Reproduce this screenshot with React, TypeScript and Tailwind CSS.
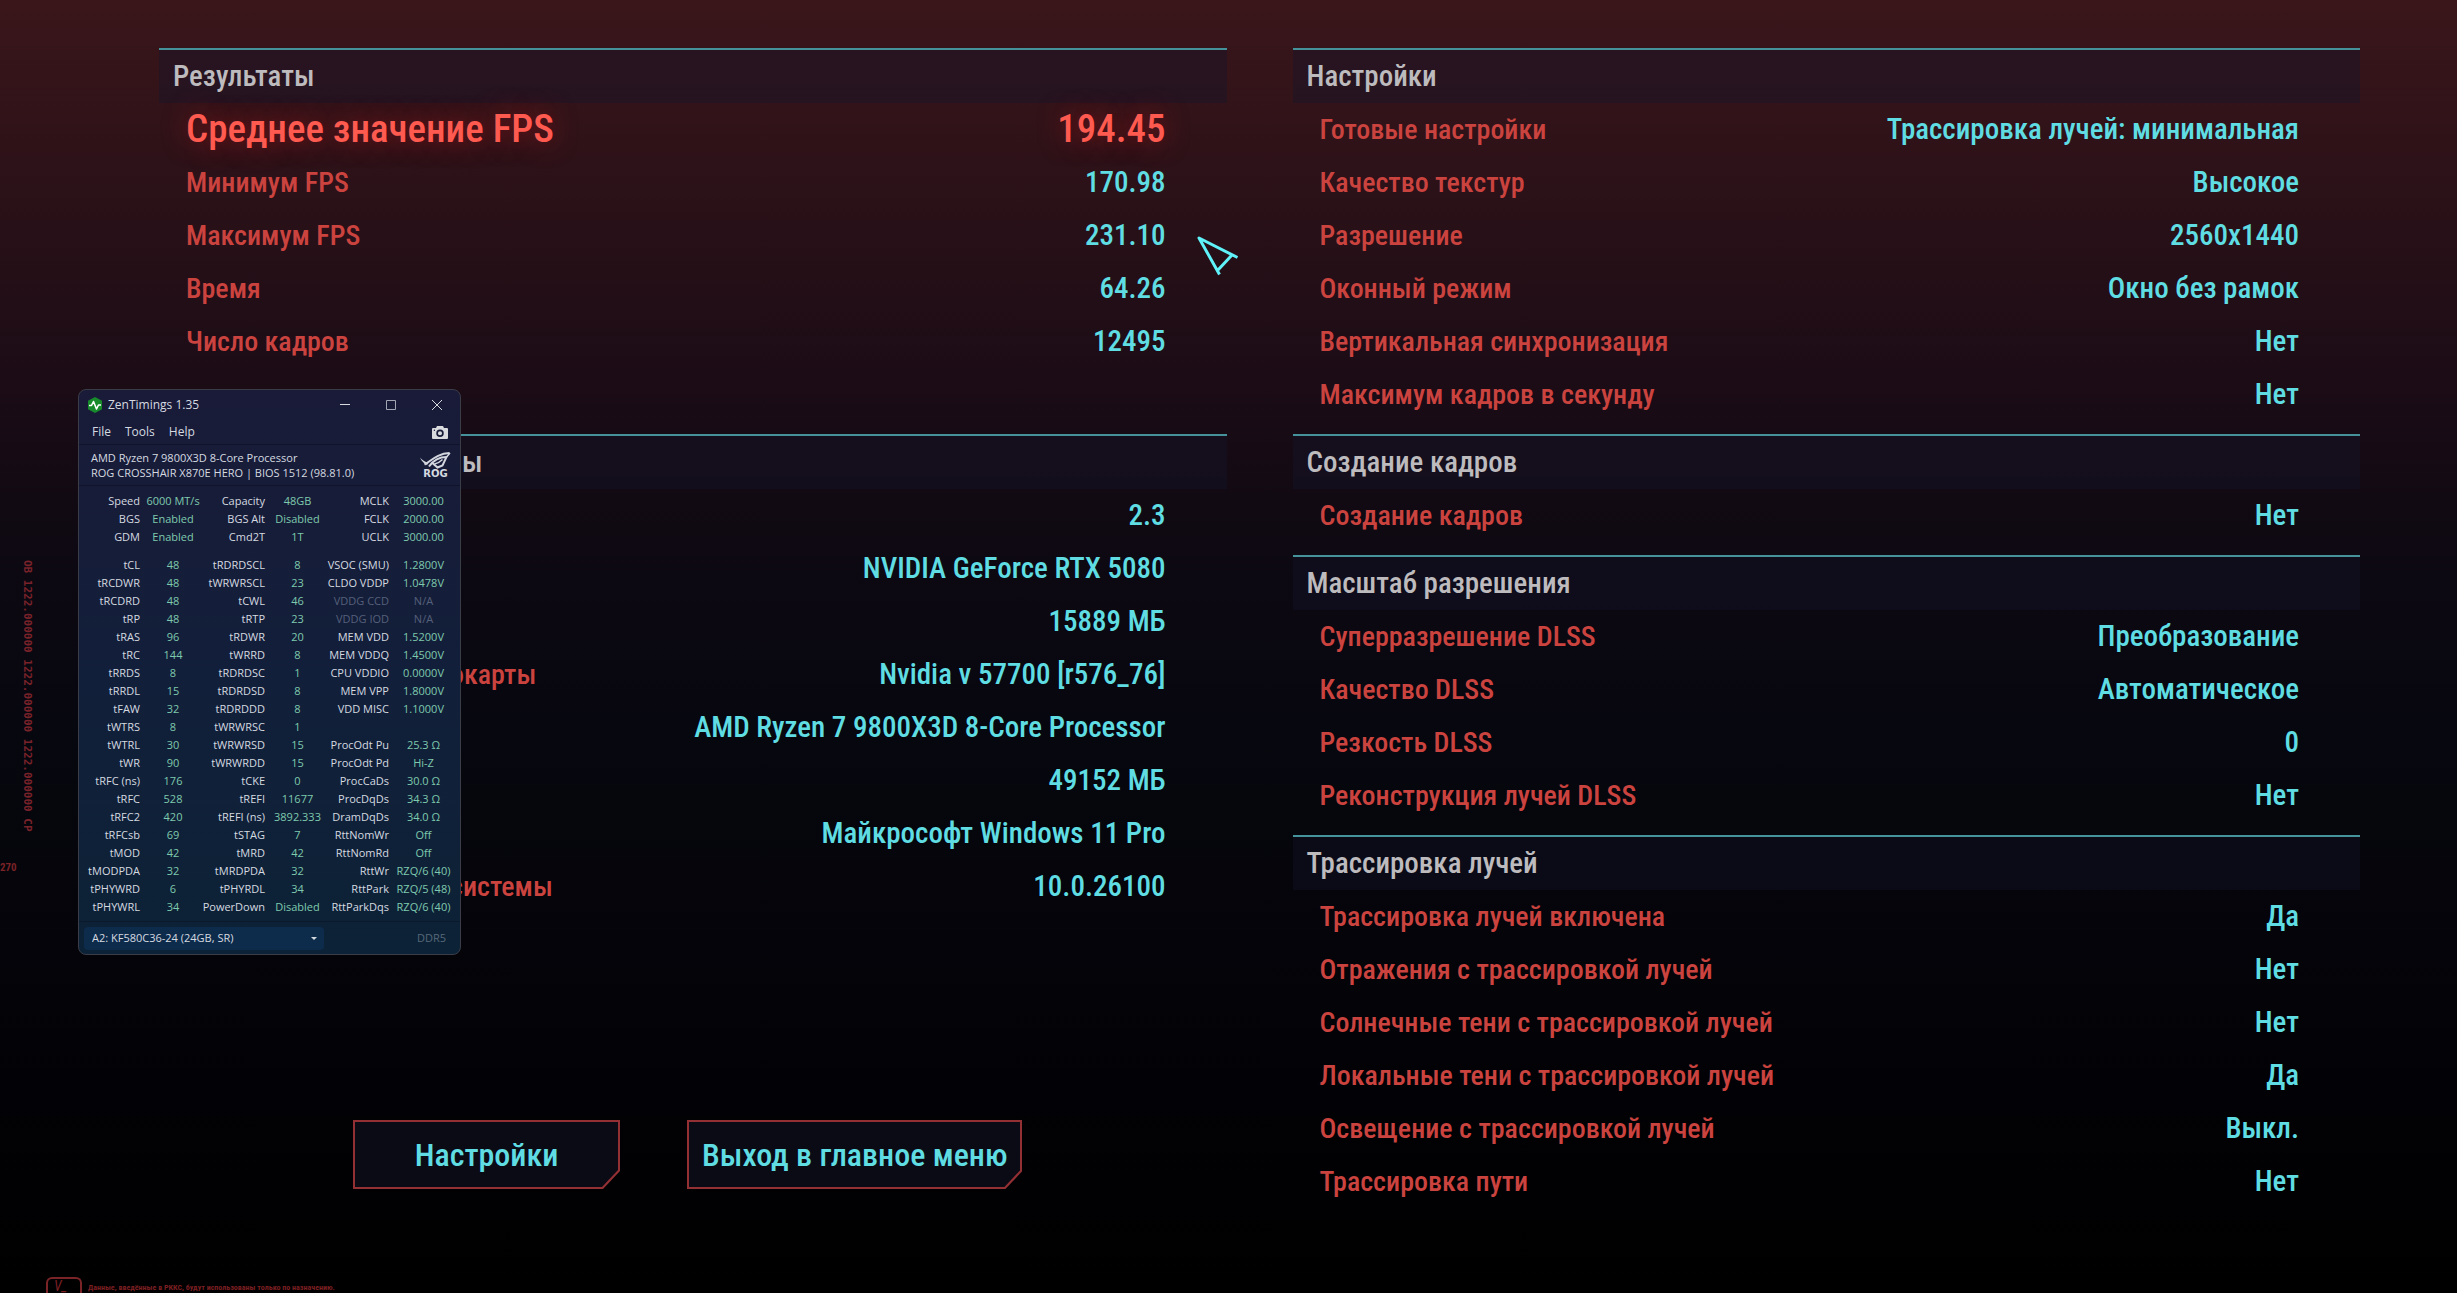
import { type ReactNode } from "react";
import { clsx } from "clsx";

type Entry = {
	label: string;
	value: string;
	highlight?: boolean;
};

const results: Entry[] = [
	{ label: "Среднее значение FPS", value: "194.45", highlight: true },
	{ label: "Минимум FPS", value: "170.98" },
	{ label: "Максимум FPS", value: "231.10" },
	{ label: "Время", value: "64.26" },
	{ label: "Число кадров", value: "12495" },
];

const system: Entry[] = [
	{ label: "Версия игры", value: "2.3" },
	{ label: "Видеокарта", value: "NVIDIA GeForce RTX 5080" },
	{ label: "Видеопамять", value: "15889 МБ" },
	{ label: "Версия драйвера видеокарты", value: "Nvidia v 57700 [r576_76]" },
	{ label: "Процессор", value: "AMD Ryzen 7 9800X3D 8-Core Processor" },
	{ label: "Память", value: "49152 МБ" },
	{ label: "Система", value: "Майкрософт Windows 11 Pro" },
	{ label: "Версия операционной системы", value: "10.0.26100" },
];

const settings: Entry[] = [
	{ label: "Готовые настройки", value: "Трассировка лучей: минимальная" },
	{ label: "Качество текстур", value: "Высокое" },
	{ label: "Разрешение", value: "2560x1440" },
	{ label: "Оконный режим", value: "Окно без рамок" },
	{ label: "Вертикальная синхронизация", value: "Нет" },
	{ label: "Максимум кадров в секунду", value: "Нет" },
];

const frameGeneration: Entry[] = [{ label: "Создание кадров", value: "Нет" }];

const scaling: Entry[] = [
	{ label: "Суперразрешение DLSS", value: "Преобразование" },
	{ label: "Качество DLSS", value: "Автоматическое" },
	{ label: "Резкость DLSS", value: "0" },
	{ label: "Реконструкция лучей DLSS", value: "Нет" },
];

const rayTracing: Entry[] = [
	{ label: "Трассировка лучей включена", value: "Да" },
	{ label: "Отражения с трассировкой лучей", value: "Нет" },
	{ label: "Солнечные тени с трассировкой лучей", value: "Нет" },
	{ label: "Локальные тени с трассировкой лучей", value: "Да" },
	{ label: "Освещение с трассировкой лучей", value: "Выкл." },
	{ label: "Трассировка пути", value: "Нет" },
];

const summaryTimings = [
	["Speed", "6000 MT/s", "Capacity", "48GB", "MCLK", "3000.00"],
	["BGS", "Enabled", "BGS Alt", "Disabled", "FCLK", "2000.00"],
	["GDM", "Enabled", "Cmd2T", "1T", "UCLK", "3000.00"],
];

const timings = [
	["tCL", "48", "tRDRDSCL", "8", "VSOC (SMU)", "1.2800V"],
	["tRCDWR", "48", "tWRWRSCL", "23", "CLDO VDDP", "1.0478V"],
	["tRCDRD", "48", "tCWL", "46", "VDDG CCD", "N/A"],
	["tRP", "48", "tRTP", "23", "VDDG IOD", "N/A"],
	["tRAS", "96", "tRDWR", "20", "MEM VDD", "1.5200V"],
	["tRC", "144", "tWRRD", "8", "MEM VDDQ", "1.4500V"],
	["tRRDS", "8", "tRDRDSC", "1", "CPU VDDIO", "0.0000V"],
	["tRRDL", "15", "tRDRDSD", "8", "MEM VPP", "1.8000V"],
	["tFAW", "32", "tRDRDDD", "8", "VDD MISC", "1.1000V"],
	["tWTRS", "8", "tWRWRSC", "1", "", ""],
	["tWTRL", "30", "tWRWRSD", "15", "ProcOdt Pu", "25.3 Ω"],
	["tWR", "90", "tWRWRDD", "15", "ProcOdt Pd", "Hi-Z"],
	["tRFC (ns)", "176", "tCKE", "0", "ProcCaDs", "30.0 Ω"],
	["tRFC", "528", "tREFI", "11677", "ProcDqDs", "34.3 Ω"],
	["tRFC2", "420", "tREFI (ns)", "3892.333", "DramDqDs", "34.0 Ω"],
	["tRFCsb", "69", "tSTAG", "7", "RttNomWr", "Off"],
	["tMOD", "42", "tMRD", "42", "RttNomRd", "Off"],
	["tMODPDA", "32", "tMRDPDA", "32", "RttWr", "RZQ/6 (40)"],
	["tPHYWRD", "6", "tPHYRDL", "34", "RttPark", "RZQ/5 (48)"],
	["tPHYWRL", "34", "PowerDown", "Disabled", "RttParkDqs", "RZQ/6 (40)"],
];

const Section = ({ title, entries }: { title: string; entries: Entry[] }) => {
	return (
		<section className="pb-[13px]">
			<h2 className="flex h-[55px] items-center border-t-2 border-[#45929a] bg-[#14142a]/40 pl-[14px] text-[29px] font-medium text-[#bdbbbd]">
				{title}
			</h2>
			<dl>
				{entries.map(({ label, value, highlight }) => (
					<div
						key={label}
						className={clsx(
							"flex h-[53px] items-center justify-between pr-[61px] pl-[27px] font-medium whitespace-nowrap",
							highlight && "text-[39px] text-[#ff5a50] [text-shadow:0_0_24px_#e0202080]",
						)}
					>
						<dt className={clsx(!highlight && "text-[28px] text-[#cb433f]")}>{label}</dt>
						<dd className={clsx(!highlight && "text-[29px] text-[#5fdde3]")}>{value}</dd>
					</div>
				))}
			</dl>
		</section>
	);
};

const MenuButton = ({ children }: { children: ReactNode }) => {
	return (
		<button
			type="button"
			className="h-[69px] bg-[#933034] p-[2px] text-[32px] font-medium text-[#5fdde3] [clip-path:polygon(0_0,100%_0,100%_calc(100%-18px),calc(100%-17px)_100%,0_100%)]"
		>
			<span className="flex h-full min-w-[263px] items-center justify-center bg-[#0b0b16] px-[13px] [clip-path:polygon(0_0,100%_0,100%_calc(100%-17px),calc(100%-16px)_100%,0_100%)]">
				{children}
			</span>
		</button>
	);
};

const TimingRow = ({ cells }: { cells: string[] }) => {
	const disabled = cells[5] === "N/A";
	return (
		<tr className="h-[18px]">
			{cells.map((cell, index) => {
				const muted = disabled && index > 3;
				return index % 2 === 0 ? (
					<th
						key={index}
						scope="row"
						className={clsx(
							"pr-[6px] text-right font-normal",
							muted ? "text-[#56607a]" : "text-[#d5dae0]",
						)}
					>
						{cell}
					</th>
				) : (
					<td
						key={index}
						className={clsx("text-center", muted ? "text-[#56607a]" : "text-[#7fcaae]")}
					>
						{cell}
					</td>
				);
			})}
		</tr>
	);
};

const ZenTimings = () => {
	return (
		<div className="absolute top-[389px] left-[78px] w-[383px] overflow-hidden rounded-lg border border-[#3a3c48] bg-linear-to-b from-[#191b38] via-[#121f3a] to-[#0c2236] font-['Open_Sans','Noto_Sans',sans-serif] text-[11px] text-[#d5dae0]">
			<div className="flex h-[30px] items-center">
				<svg viewBox="0 0 16 16" className="ml-[8px] size-4">
					<path d="M8 0l7 3.8v8.4L8 16l-7-3.8V3.8z" fill="#178a2c" />
					<path
						d="M2 8.5h2.5L6.5 4.5l3 7.5 2-4h2.5"
						fill="none"
						stroke="#fff"
						strokeWidth="1.6"
						strokeLinejoin="round"
					/>
				</svg>
				<span className="ml-[5px] text-xs">ZenTimings 1.35</span>
				<div className="ml-auto flex">
					<button type="button" aria-label="Minimize" className="flex w-[46px] justify-center">
						<svg viewBox="0 0 10 10" className="size-[10px]" stroke="#d5dae0">
							<path d="M0 4.5h10" />
						</svg>
					</button>
					<button type="button" aria-label="Maximize" className="flex w-[46px] justify-center">
						<svg viewBox="0 0 10 10" className="size-[10px]" fill="none" stroke="#a3a7b3">
							<path d="M.5.5h9v9h-9z" />
						</svg>
					</button>
					<button type="button" aria-label="Close" className="flex w-[46px] justify-center">
						<svg viewBox="0 0 10 10" className="size-[10px]" stroke="#d5dae0">
							<path d="M0 0l10 10M10 0L0 10" />
						</svg>
					</button>
				</div>
			</div>
			<nav className="flex h-[25px] items-center gap-[14px] border-b border-[#10132a] pr-[12px] pl-[13px] text-xs">
				<button type="button">File</button>
				<button type="button">Tools</button>
				<button type="button">Help</button>
				<button type="button" aria-label="Screenshot" className="ml-auto">
					<svg viewBox="0 0 16 13" className="h-[13px] w-4">
						<path
							d="M5 0h6l1 2h3a1 1 0 0 1 1 1v9a1 1 0 0 1-1 1H1a1 1 0 0 1-1-1V3a1 1 0 0 1 1-1h3z"
							fill="#d8dade"
						/>
						<circle cx="8" cy="7.3" r="2.9" fill="none" stroke="#181c38" strokeWidth="1.7" />
						<circle cx="2.4" cy="4.3" r=".7" fill="#181c38" />
					</svg>
				</button>
			</nav>
			<div className="flex h-[41px] items-center justify-between border-b border-[#10132a] pr-[9px] pl-[12px] leading-[15px]">
				<div>
					<p>AMD Ryzen 7 9800X3D 8-Core Processor</p>
					<p>ROG CROSSHAIR X870E HERO | BIOS 1512 (98.81.0)</p>
				</div>
				<div className="flex flex-col items-center">
					<svg viewBox="0 0 31 17" className="h-[17px] w-[31px]" fill="none" stroke="#d3d6de">
						<path d="M0 5.5c2 2.5 5 4.5 8.500 5.500l-1.500 2C4 11.500 1.500 9 0 5.500z" fill="#d3d6de" stroke="none" />
						<path d="M4.5 12.5C11 9 17 1.5 29.5 1" strokeWidth="2" />
						<path d="M9 14.5C14 7.5 21 5 26.5 5l-4 8.500-5 2-4.500-4" strokeWidth="2" />
						<path d="M14.5 12c3-.5 6-2.500 8-4.500M27 4.500L30 1" strokeWidth="1.5" />
					</svg>
					<span className="font-['DejaVu_Sans',sans-serif] text-[10px] leading-[10px] font-bold">
						ROG
					</span>
				</div>
			</div>
			<table className="mt-[6px] mb-[5px] w-[373px] table-fixed leading-[18px] whitespace-nowrap">
				<colgroup>
					<col className="w-[67px]" />
					<col className="w-[54px]" />
					<col className="w-[71px]" />
					<col className="w-[53px]" />
					<col className="w-[71px]" />
					<col className="w-[57px]" />
				</colgroup>
				<tbody>
					{summaryTimings.map((cells) => (
						<TimingRow key={cells[0]} cells={cells} />
					))}
				</tbody>
				<tbody>
					<tr className="h-[10px]" />
					{timings.map((cells) => (
						<TimingRow key={cells[0]} cells={cells} />
					))}
				</tbody>
			</table>
			<div className="flex h-[33px] items-center justify-between border-t border-[#0a1a2c] pr-[14px] pl-[5px]">
				<div className="relative">
					<select
						aria-label="Memory module"
						className="h-[23px] w-[240px] appearance-none rounded-sm bg-[#0d2c4c] pl-[8px]"
					>
						<option>A2: KF580C36-24 (24GB, SR)</option>
					</select>
					<span className="pointer-events-none absolute top-[10px] right-[7px] border-x-[3px] border-t-[3px] border-x-transparent border-t-[#d5dae0]" />
				</div>
				<span className="text-[#56687a]">DDR5</span>
			</div>
		</div>
	);
};

const Cursor = () => {
	return (
		<svg
			viewBox="0 0 42 40"
			className="absolute top-[236px] left-[1197px] h-[40px] w-[42px]"
			fill="none"
			stroke="#5ff2f8"
			strokeWidth="3"
		>
			<path d="M22.5 38.5L2 2l38.500 19.500M21 34l14-15" strokeLinejoin="round" />
		</svg>
	);
};

export default function App() {
	return (
		<main className="relative flex min-h-screen flex-col overflow-hidden bg-black bg-[linear-gradient(#3a161a,#2b1118_15%,#1c0c16_29%,#0e0912_42%,#07070f_56%,#020206_84%,#000)] font-['Roboto_Condensed','Liberation_Sans',sans-serif]">
			<div className="grid grid-cols-2 gap-[66px] pt-[48px] pr-[97px] pl-[159px]">
				<div className="flex flex-col">
					<Section title="Результаты" entries={results} />
					<div className="mt-[53px]">
						<Section title="Характеристики системы" entries={system} />
					</div>
					<div className="mt-[194px] flex gap-[67px] pl-[194px]">
						<MenuButton>Настройки</MenuButton>
						<MenuButton>Выход в главное меню</MenuButton>
					</div>
				</div>
				<div>
					<Section title="Настройки" entries={settings} />
					<Section title="Создание кадров" entries={frameGeneration} />
					<Section title="Масштаб разрешения" entries={scaling} />
					<Section title="Трассировка лучей" entries={rayTracing} />
				</div>
			</div>

			<p className="absolute top-[560px] left-[18px] font-['DejaVu_Sans_Mono',monospace] text-[11px] font-bold text-[#7a222a] [writing-mode:vertical-rl]">
				OB 1222.000000 1222.000000 1222.000000 CP
			</p>
			<p className="absolute top-[860px] left-0 text-[11px] font-bold text-[#7a2226]">270</p>
			<div className="absolute top-[1277px] left-[46px] flex gap-[6px] text-[#7a1f22]">
				<span className="h-[16px] w-[36px] rounded-t-md border-2 border-b-0 border-[#7a2428] pl-[6px] text-[14px] leading-[14px] italic">
					V_
				</span>
				<span className="pt-[6px] text-[8px] leading-[10px] font-bold">
					Данные, введённые в РККС, будут использованы только по назначению.
				</span>
			</div>

			<ZenTimings />
			<Cursor />
		</main>
	);
}
